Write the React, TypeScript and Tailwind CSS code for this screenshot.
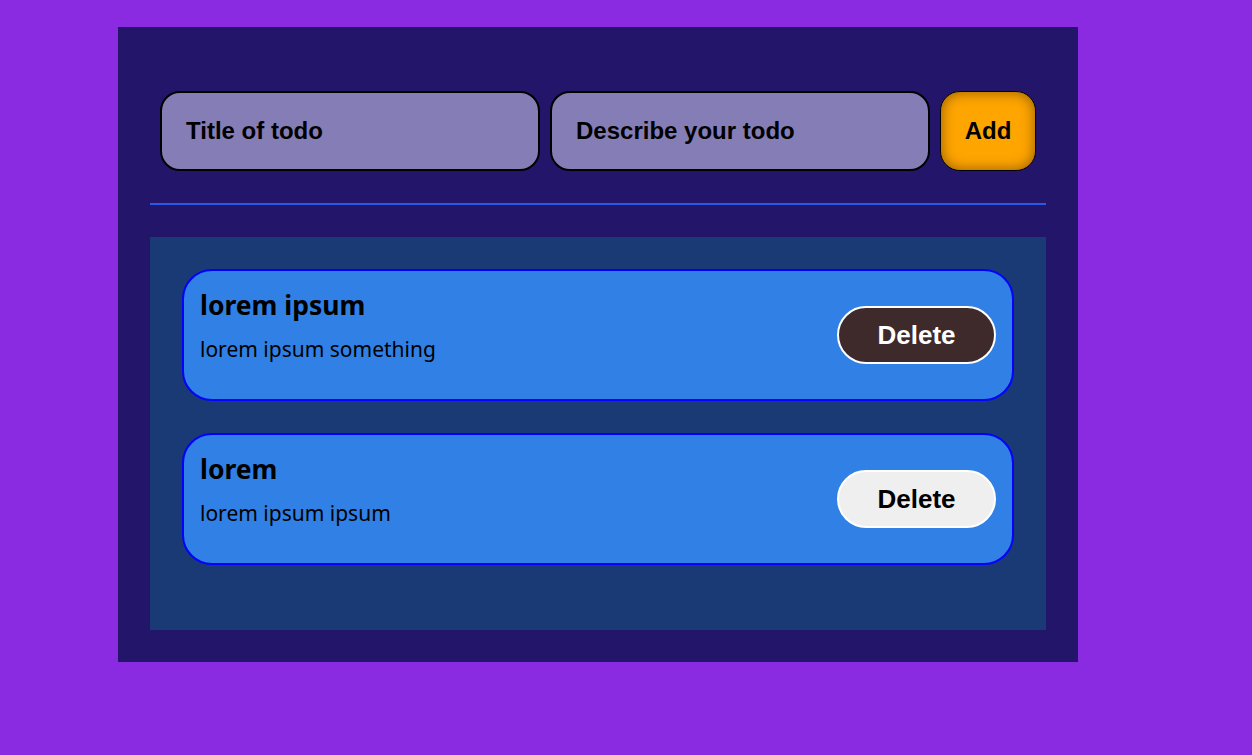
import React from "react";

const todos = [
  { title: "lorem ipsum", desc: "lorem ipsum something", dark: true },
  { title: "lorem", desc: "lorem ipsum ipsum", dark: false },
];

export default function App() {
  return (
    <div className="min-h-[755px] w-full bg-[#8a2be2] pt-[27px] pl-[118px]">
      <div className="w-[960px] bg-[#22156a] px-8 pt-16 pb-8">
        <div className="flex gap-[10px] px-[10px]">
          <div className="flex h-[80px] w-[380px] items-center rounded-[20px] border-2 border-black bg-[#857db6] pl-[24px] text-[24px] font-bold text-black [font-family:'Liberation_Sans',Arial,sans-serif]">
            Title of todo
          </div>
          <div className="flex h-[80px] w-[380px] items-center rounded-[20px] border-2 border-black bg-[#857db6] pl-[24px] text-[24px] font-bold text-black [font-family:'Liberation_Sans',Arial,sans-serif]">
            Describe your todo
          </div>
          <div className="flex h-[80px] w-[96px] items-center justify-center rounded-[20px] border border-black bg-[#ffa500] text-[24px] font-bold text-black shadow-[inset_0_0_14px_rgba(0,0,0,0.45)] [font-family:'Liberation_Sans',Arial,sans-serif]">
            Add
          </div>
        </div>
        <div className="mt-[32px] h-[2px] w-full bg-[#2b58e6]" />
        <div className="mt-[32px] flex h-[393px] flex-col gap-[32px] bg-[#1a3a76] px-8 pt-8">
          {todos.map((t, i) => (
            <div
              key={i}
              className="flex h-[132px] items-center justify-between rounded-[30px] border-2 border-[#0000ff] bg-[#3080e6] pl-[16px] pr-[16px]"
            >
              <div className="flex flex-col self-start pt-[14px] text-black [font-family:'Noto_Sans',sans-serif]">
                <div className="text-[26.5px] font-bold leading-[40px]">{t.title}</div>
                <div className="mt-[9px] text-[21px] leading-[30px]">{t.desc}</div>
              </div>
              <div
                className={
                  t.dark
                    ? "flex h-[58px] w-[159px] items-center justify-center rounded-full border-2 border-white bg-[#3e2a2a] text-[26px] font-bold text-white [font-family:'Liberation_Sans',Arial,sans-serif]"
                    : "flex h-[58px] w-[159px] items-center justify-center rounded-full border-2 border-white bg-[#efefef] text-[26px] font-bold text-black [font-family:'Liberation_Sans',Arial,sans-serif]"
                }
              >
                Delete
              </div>
            </div>
          ))}
        </div>
      </div>
    </div>
  );
}
